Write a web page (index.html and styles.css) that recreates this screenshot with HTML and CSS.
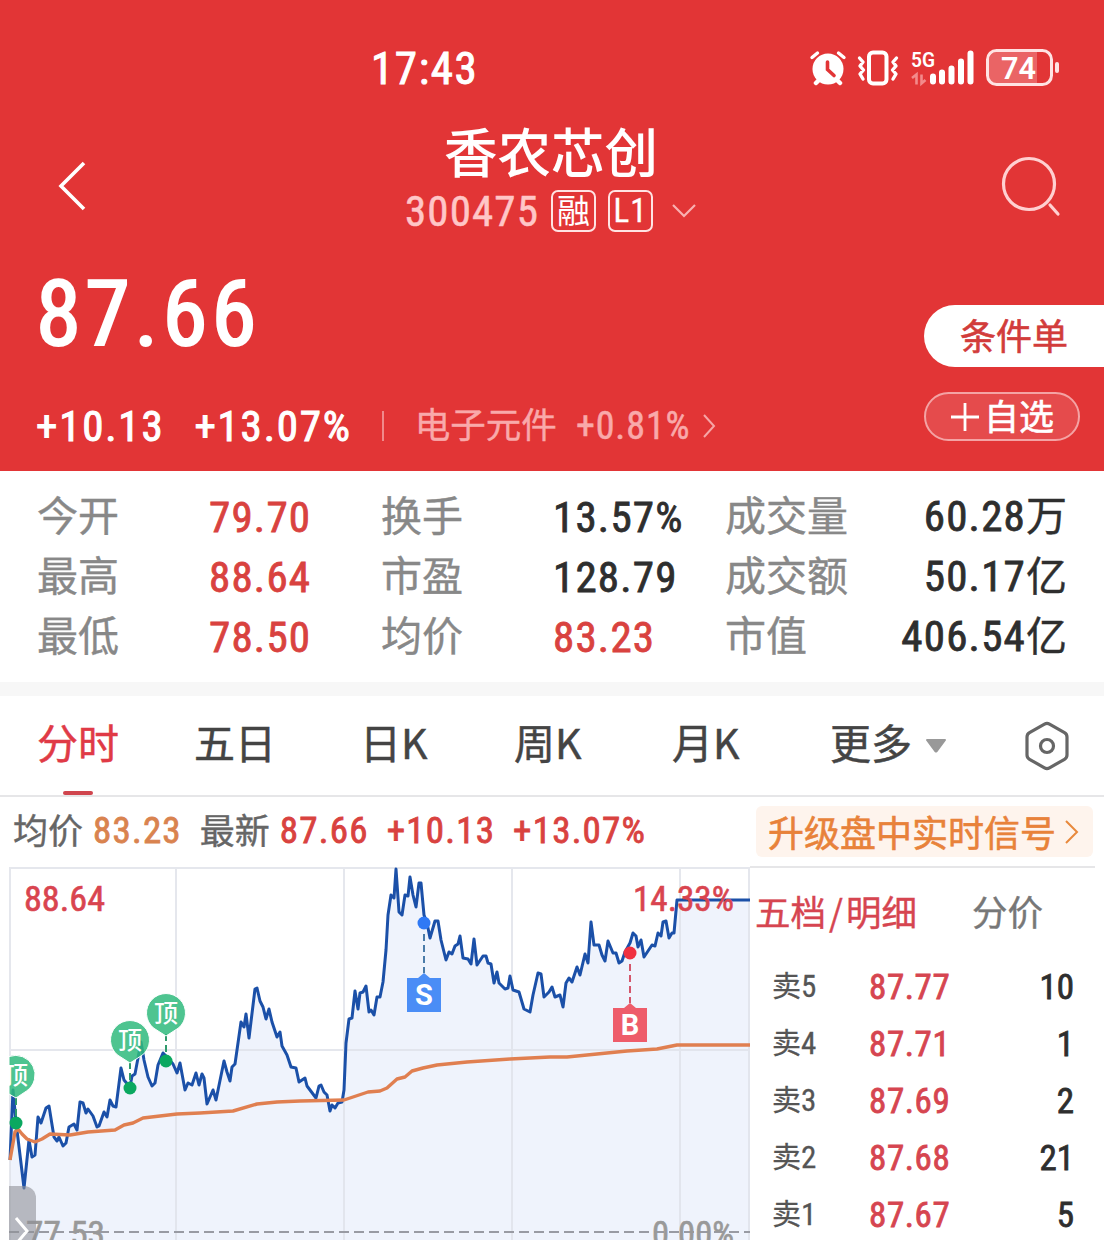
FILE: index.html
```html
<!DOCTYPE html>
<html lang="zh-CN">
<head>
  <meta charset="utf-8">
  <meta name="viewport" content="width=device-width, initial-scale=1">
  <title>香农芯创 300475</title>
  <link rel="stylesheet" href="styles.css">
</head>
<body>
  <header class="header">
    <div class="status-bar">
      <span class="num clock">17:43</span>
      <div class="status-icons">
        <svg class="alarm" width="38" height="36" viewBox="0 0 38 36">
          <g fill="none" stroke="#fff" stroke-linecap="round">
            <path d="M3 7.500 8.500 3M35 7.500 29.500 3" stroke-width="3.400"/>
            <path d="M7 33l4-4M31 33l-4-4" stroke-width="4.500"/>
          </g>
          <circle cx="19" cy="19" r="15.500" fill="#fff"/>
          <path d="M18.500 12v7.500l6.500 6" fill="none" stroke="#e23536" stroke-width="3.600" stroke-linecap="round"/>
        </svg>
        <svg class="vibrate" width="42" height="36" viewBox="0 0 42 36" fill="none" stroke="#fff" stroke-linecap="round" stroke-linejoin="round">
          <rect x="12" y="2.500" width="17.500" height="31" rx="4" stroke-width="4"/>
          <path d="M2.500 8l3.500 4-3 4 3.500 4-3.500 4 3 5M39.500 8l-3.500 4 3 4-3.500 4 3.500 4-3 5" stroke-width="3.400"/>
        </svg>
        <svg class="signal" width="64" height="36" viewBox="0 0 64 36">
          <text x="0" y="17" class="net" textLength="24" lengthAdjust="spacingAndGlyphs">5G</text>
          <g stroke="#fff" stroke-width="6" stroke-linecap="round">
            <path d="M22 31.500v-5M31 31.500v-9M40.500 31.500v-13M50 31.500v-20M59.500 31.500v-28"/>
          </g>
          <path d="M1 28l4.500-3.500v10M10.500 24.500v9l4-3.500" fill="none" stroke="#f38a8b" stroke-width="2.600"/>
        </svg>
        <svg class="battery" width="74" height="38" viewBox="0 0 74 38">
          <path d="M11 3H51V35H11a8 8 0 0 1-8-8V11a8 8 0 0 1 8-8z" fill="#ea6465"/>
          <rect x="1.500" y="1.500" width="64" height="34" rx="9" fill="none" stroke="#ffe3e3" stroke-width="3"/>
          <rect x="69" y="13" width="4" height="11" rx="2" fill="#ffe3e3"/>
          <text x="15" y="30" class="level" textLength="35" lengthAdjust="spacingAndGlyphs">74</text>
        </svg>
      </div>
    </div>

    <nav class="nav">
      <svg class="back" width="30" height="50" viewBox="0 0 30 50"><path d="M27 2 4 25l23 23" fill="none" stroke="#fff" stroke-width="3.600"/></svg>
      <div class="title">
        <h1>香农芯创</h1>
        <div class="code-row">
          <span class="num code">300475</span>
          <span class="tag">融</span>
          <span class="tag num">L1</span>
          <svg width="26" height="16" viewBox="0 0 26 16"><path d="M2 2l11 11L24 2" fill="none" stroke="#f9b0b1" stroke-width="2.200"/></svg>
        </div>
      </div>
      <svg class="search" width="60" height="62" viewBox="0 0 60 62" fill="none" stroke="#ffd0d1" stroke-width="3.200">
        <circle cx="28" cy="29" r="25.500"/>
        <path d="M49 50l8 9" stroke-linecap="round"/>
      </svg>
    </nav>

    <div class="quote">
      <div class="quote-main">
        <div class="num price">87.66</div>
        <div class="change-row">
          <span class="num change">+10.13</span>
          <span class="num change">+13.07%</span>
          <span class="divider"></span>
          <span class="sector">电子元件</span>
          <span class="num sector-change">+0.81%</span>
          <svg width="16" height="26" viewBox="0 0 16 26"><path d="M3 2l10 11L3 24" fill="none" stroke="#f6a5a6" stroke-width="2"/></svg>
        </div>
      </div>
      <div class="quote-actions">
        <button class="btn btn-order">条件单</button>
        <button class="btn btn-add">
          <svg width="30" height="30" viewBox="0 0 30 30"><path d="M15 1v28M1 15h28" stroke="#fff" stroke-width="2.800"/></svg>自选
        </button>
      </div>
    </div>
  </header>

  <section class="stats">
    <span class="label">今开</span><span class="num red">79.70</span>
    <span class="label">换手</span><span class="num">13.57%</span>
    <span class="label">成交量</span><span class="total"><span class="num">60.28</span>万</span>
    <span class="label">最高</span><span class="num red">88.64</span>
    <span class="label">市盈</span><span class="num">128.79</span>
    <span class="label">成交额</span><span class="total"><span class="num">50.17</span>亿</span>
    <span class="label">最低</span><span class="num red">78.50</span>
    <span class="label">均价</span><span class="num red">83.23</span>
    <span class="label">市值</span><span class="total"><span class="num">406.54</span>亿</span>
  </section>

  <div class="tabs">
    <span class="tab active">分时</span>
    <span class="tab">五日</span>
    <span class="tab">日K</span>
    <span class="tab">周K</span>
    <span class="tab">月K</span>
    <span class="tab">更多<svg width="22" height="14" viewBox="0 0 22 14"><path d="M2 1h18L11.500 12.500h-1z" fill="#999" stroke="#999" stroke-width="2" stroke-linejoin="round"/></svg></span>
    <svg width="44" height="50" viewBox="0 0 44 50" fill="none" stroke="#666" stroke-width="3.200" stroke-linejoin="round">
      <path d="M19.500 3.200a5 5 0 0 1 5 0l15 8.500a5 5 0 0 1 2.500 4.300v18a5 5 0 0 1-2.500 4.300l-15 8.500a5 5 0 0 1-5 0l-15-8.500A5 5 0 0 1 2 34V16a5 5 0 0 1 2.500-4.300z"/>
      <circle cx="22" cy="25" r="6.500"/>
    </svg>
  </div>

  <div class="summary">
    <span class="sum-label">均价</span>
    <span class="num sum-avg">83.23</span>
    <span class="sum-label">最新</span>
    <span class="num sum-last">87.66</span>
    <span class="num sum-chg">+10.13</span>
    <span class="num sum-pct">+13.07%</span>
    <a class="upgrade">升级盘中实时信号<svg width="16" height="26" viewBox="0 0 16 26"><path d="M2 2l11 11L2 24" fill="none" stroke="#e8893c" stroke-width="2"/></svg></a>
  </div>

  <main class="market">
    <svg class="chart" width="750" height="374" viewBox="0 866 750 374">
      <path class="area" d=""/>
      <path class="grid" d="M9 868H750M10 867V1240M176 867V1240M344 867V1240M512 867V1240M680 867V1240M749 867V1240M10 1050H750"/>
      <path class="base" d="M9 1232H750"/>
      <polyline class="price-line" points="10,1160 13,1090 16,1122 24,1188 29,1140 32,1157 35,1155 38,1117 41,1123 46,1108 49,1106 54,1137 57,1141 59,1137 63,1146 66,1143 69,1127 74,1124 77,1130 80,1102 83,1103 86,1113 88,1109 93,1116 97,1127 99,1126 104,1112 107,1117 110,1100 113,1106 116,1107 121,1068 124,1080 130,1087 132,1076 135,1074 138,1058 141,1042 144,1060 148,1077 152,1086 155,1083 158,1065 163,1053 167,1057 173,1064 177,1073 180,1063 185,1090 188,1083 192,1085 196,1073 199,1085 202,1074 204,1078 207,1104 213,1090 216,1100 224,1061 227,1072 230,1081 232,1067 235,1064 241,1022 244,1027 246,1014 249,1038 255,989 257,988 260,1001 263,1007 266,1019 269,1009 272,1022 277,1037 280,1032 282,1046 287,1055 291,1067 296,1068 299,1082 305,1078 307,1086 316,1098 319,1086 321,1085 324,1092 327,1095 330,1111 332,1105 335,1108 338,1103 342,1102 344,1090 346,1043 349,1019 352,1018 355,991 358,1009 360,993 363,992 366,986 369,1012 371,1010 374,1015 377,997 380,997 383,982 386,950 388,915 391,895 394,898 396,869 399,912 402,915 405,895 408,896 410,877 413,895 416,907 419,883 421,883 424,915 427,923 430,938 435,921 438,921 441,940 446,960 449,952 452,954 455,946 458,944 460,936 463,958 468,959 471,964 474,939 477,965 483,956 486,956 488,963 491,964 494,983 497,972 499,983 505,989 508,988 510,976 513,990 519,992 524,1009 530,1012 533,995 538,973 541,974 544,997 549,992 552,987 555,997 560,995 563,1007 566,983 569,978 572,982 577,967 580,975 585,954 588,963 591,922 594,945 599,945 602,955 605,961 608,941 613,953 616,953 619,963 622,961 625,952 630,943 633,933 636,936 638,947 641,940 644,957 652,945 655,946 658,933 661,936 663,922 666,921 669,938 672,933 674,933 677,900 750,900"/>
      <polyline class="avg-line" points="10,1160 15,1132 18,1129 22,1134 27,1139 35,1142 42,1139 50,1134 70,1135 88,1132 115,1130 124,1125 133,1123 143,1118 177,1114 200,1113 233,1111 257,1104 277,1102 300,1101 344,1100 368,1092 380,1091 387,1088 397,1079 405,1077 412,1071 423,1068 437,1065 467,1062 510,1059 550,1057 567,1057 627,1051 657,1049 677,1045 750,1045"/>

      <text class="num axis up" x="24" y="911" textLength="81" lengthAdjust="spacingAndGlyphs">88.64</text>
      <text class="num axis up" x="633" y="911" textLength="101" lengthAdjust="spacingAndGlyphs">14.33%</text>
      <text class="num axis flat" x="26" y="1246" textLength="79" lengthAdjust="spacingAndGlyphs">77.53</text>
      <text class="num axis flat" x="652" y="1246" textLength="82" lengthAdjust="spacingAndGlyphs">0.00%</text>

      <!-- top signals -->
      <g class="top-signal">
        <path class="stem" d="M16 1098V1117M130 1062V1082M166 1034V1055"/>
        <path class="pin" d="M9 1056.500A19.500 19.500 0 0 1 26.500 1091L16 1098 9 1094z"/>
        <path class="pin" d="M117.500 1055A19.500 19.500 0 1 1 142.500 1055L130 1063z"/>
        <path class="pin" d="M153.500 1028A19.500 19.500 0 1 1 178.500 1028L166 1036z"/>
        <circle cx="16" cy="1123" r="6.500"/>
        <circle cx="130" cy="1088" r="6.500"/>
        <circle cx="166" cy="1061" r="6.500"/>
        <svg x="9" y="1056" width="40" height="40" viewBox="9 1056 40 40"><text x="16" y="1084">顶</text></svg>
        <text x="130" y="1049">顶</text>
        <text x="166" y="1022">顶</text>
      </g>

      <!-- sell / buy signals -->
      <g class="trade sell">
        <path class="stem" d="M424 934V973"/>
        <circle cx="424" cy="923" r="6.500"/>
        <path class="flag" d="M407 978H418L424 973 430 978H441V1012H407z"/>
        <text x="424" y="1005">S</text>
      </g>
      <g class="trade buy">
        <path class="stem" d="M630 964V1003"/>
        <circle cx="630" cy="953" r="6.500"/>
        <path class="flag" d="M613 1008H624L630 1003 636 1008H647V1042H613z"/>
        <text x="630" y="1035">B</text>
      </g>

      <!-- side drawer handle -->
      <path class="handle" d="M9 1186H24a12 12 0 0 1 12 12V1240H9z"/>
      <path class="handle-arrow" d="M16 1218L27 1231 16 1244"/>
    </svg>

    <aside class="orders">
      <div class="order-tabs">
        <span class="order-tab active">五档<span class="slash">/</span>明细</span>
        <span class="order-tab">分价</span>
      </div>
      <div class="order-row"><span class="level-name">卖<i class="num">5</i></span><span class="num red">87.77</span><span class="num qty">10</span></div>
      <div class="order-row"><span class="level-name">卖<i class="num">4</i></span><span class="num red">87.71</span><span class="num qty">1</span></div>
      <div class="order-row"><span class="level-name">卖<i class="num">3</i></span><span class="num red">87.69</span><span class="num qty">2</span></div>
      <div class="order-row"><span class="level-name">卖<i class="num">2</i></span><span class="num red">87.68</span><span class="num qty">21</span></div>
      <div class="order-row"><span class="level-name">卖<i class="num">1</i></span><span class="num red">87.67</span><span class="num qty">5</span></div>
    </aside>
  </main>

  <script>
    // shade everything below the price line
    const line = document.querySelector('.price-line').getAttribute('points');
    document.querySelector('.area').setAttribute('d', `M10 1240L${line.replaceAll(' ', 'L')}V1240z`);
  </script>
</body>
</html>
```
FILE: styles.css
```css
:root {
  --brand: #e23536;
  --red: #d9423f;
  --text: #2e2e2e;
  --muted: #888;
  --line: #e6e6e8;
  --orange: #e8823a;
}
* { box-sizing: border-box; }
body {
  margin: 0;
  width: 1104px;
  height: 1240px;
  overflow: hidden;
  background: #fff;
  color: var(--text);
  font-family: "Noto Sans CJK SC", sans-serif;
}
svg { display: block; flex: none; }
.num {
  font-family: Roboto, "Noto Sans CJK SC", sans-serif;
  font-stretch: 85%;
  font-weight: 400;
  font-style: normal;
  -webkit-text-stroke: .8px;
}
.red { color: var(--red); }

/* header */
.header {
  height: 471px;
  background: var(--brand);
  color: #fff;
}
.status-bar {
  display: flex;
  align-items: center;
  justify-content: space-between;
  height: 136px;
  padding: 0 44px 0 371px;
}
.clock { font-size: 45px; letter-spacing: 1.6px; -webkit-text-stroke: 1px; }
.status-icons { display: flex; align-items: center; }
.vibrate { margin-left: 10px; }
.signal { margin-left: 12px; overflow: visible; }
.battery { margin-left: 11px; }
.net { font: 600 21px Roboto, sans-serif; fill: #fff; }
.level { font: 600 31px Roboto, sans-serif; fill: #fff; }
.nav {
  display: flex;
  align-items: center;
  justify-content: space-between;
  height: 120px;
  margin-top: -10px;
  padding: 0 43px 0 57px;
}
.title {
  display: flex;
  flex-direction: column;
  align-items: center;
  margin: -3px 0 0 14px;
}
h1 {
  margin: 0;
  font-size: 53.5px;
  font-weight: 500;
  line-height: 52px;
}
.code-row {
  display: flex;
  align-items: center;
  gap: 12px;
  height: 70px;
}
.code { font-size: 43px; color: #ffc6c7; letter-spacing: 1.1px; -webkit-text-stroke: .5px; }
.tag {
  width: 45px;
  height: 42px;
  border: 2px solid #ffe3e3;
  border-radius: 7px;
  font-size: 33px;
  line-height: 35px;
  text-align: center;
}
.tag.num { line-height: 38px; letter-spacing: 1px; -webkit-text-stroke: .3px; }
.code-row svg { margin-left: 6px; }
.quote { display: flex; justify-content: space-between; }
.quote-main { padding: 15px 0 0 36px; }
.price {
  font-size: 91px;
  line-height: 107px;
  letter-spacing: 4.2px;
  -webkit-text-stroke: 2.2px;
}
.change-row {
  display: flex;
  align-items: center;
  height: 60px;
  margin-top: 28px;
}
.change { margin-right: 30px; font-size: 43px; letter-spacing: 1.8px; -webkit-text-stroke: 1px; }
.divider { width: 2px; height: 30px; background: #f08a8b; }
.sector {
  margin-left: 31px;
  font-size: 35.5px;
  line-height: 56px;
  padding-bottom: 6px;
  color: #f9a9aa;
  -webkit-text-stroke: .4px;
}
.sector-change { margin: 0 10px 0 19px; font-size: 38px; letter-spacing: .9px; color: #f9a9aa; -webkit-text-stroke: .5px; }
.quote-actions {
  display: flex;
  flex-direction: column;
  gap: 25px;
  width: 180px;
  padding-top: 59px;
}
.btn {
  display: flex;
  align-items: center;
  justify-content: center;
  border: 0;
  padding: 0 0 4px;
  font: 400 36px "Noto Sans CJK SC", sans-serif;
  -webkit-text-stroke: .6px;
}
.btn-order {
  height: 62px;
  border-radius: 31px 0 0 31px;
  background: #fff;
  color: #d23c3b;
}
.btn-add {
  width: 156px;
  height: 49px;
  border: 2px solid #f4a3a4;
  border-radius: 25px;
  background: #e54b4c;
  color: #fff;
  font-size: 35px;
  line-height: 45px;
}
.btn-add svg { margin: 4px 4px 0 0; }

/* stats */
.stats {
  display: grid;
  grid-template-columns: 172px 172px 172px 172px auto 1fr;
  grid-auto-rows: 60px;
  align-items: center;
  height: 211px;
  padding: 16px 37px 0;
  font-size: 41px;
}
.stats .num { font-size: 43px; letter-spacing: 1.2px; }
.label {
  padding-bottom: 7px;
  line-height: 53px;
  color: var(--muted);
  -webkit-text-stroke: .4px;
}
.total { text-align: right; line-height: 56px; padding-bottom: 5px; -webkit-text-stroke: .4px; }

/* chart tabs */
.tabs {
  display: grid;
  grid-template-columns: 157px 166px 154px 158px 158px 195px auto;
  align-items: center;
  height: 115px;
  border-top: 14px solid #f7f7f7;
  border-bottom: 2px solid var(--line);
  padding-left: 37px;
  font-size: 41px;
  color: #444;
}
.tab {
  display: flex;
  align-items: center;
  height: 99px;
  padding-bottom: 9px;
  line-height: 90px;
  -webkit-text-stroke: .5px;
}
.tab svg { margin: 9px 0 0 13px; }
.tab.active { position: relative; color: #e03a46; }
.tab.active::after {
  content: "";
  position: absolute;
  left: 26px;
  bottom: 0;
  width: 30px;
  height: 4px;
  border-radius: 2px;
  background: #d0454e;
}

.summary {
  display: flex;
  align-items: center;
  height: 69px;
  padding-left: 13px;
  font-size: 35px;
  color: #666;
}
.summary .num { font-size: 37px; letter-spacing: 1.2px; margin-top: -2px; }
.sum-label { line-height: 60px; padding-bottom: 6px; -webkit-text-stroke: .4px; }
.summary .sum-avg { margin: -2px 18px 0 10px; color: #d9834f; }
.sum-last { margin-left: 10px; }
.sum-chg, .sum-pct { margin-left: 18px; }
.sum-last, .sum-chg, .sum-pct { color: var(--red); }
.upgrade {
  display: flex;
  align-items: center;
  gap: 8px;
  width: 337px;
  height: 51px;
  margin: 0 11px 0 auto;
  padding-left: 12px;
  border-radius: 6px;
  background: #fef4ed;
  color: var(--orange);
  font-size: 36px;
  line-height: 49px;
  -webkit-text-stroke: .6px;
}

/* chart */
.market { display: flex; }
.area { fill: #eff3fc; }
.grid { fill: none; stroke: #dfe1e8; stroke-opacity: .8; stroke-width: 2; }
.base { stroke: #999ba3; stroke-width: 2; stroke-dasharray: 10 5; }
.price-line { fill: none; stroke: #1b50a8; stroke-width: 3; stroke-linejoin: round; }
.avg-line { fill: none; stroke: #e07f50; stroke-width: 3.4; stroke-linejoin: round; }
.axis { font-size: 35px; stroke-width: .6px; -webkit-text-stroke: 0; }
.up { fill: #d9444f; stroke: #d9444f; }
.flat { fill: #999; stroke: #999; }
.stem { fill: none; stroke-width: 2; stroke-dasharray: 7 4; }
.top-signal .stem { stroke: #2f9a6c; }
.top-signal circle { fill: #0aa860; }
.top-signal text { font-size: 24px; font-weight: 500; fill: #fff; text-anchor: middle; }
.pin { fill: #2fba7c; fill-opacity: .85; stroke: #fff; stroke-width: 1; }
.trade text { font: 700 29px Roboto, sans-serif; fill: #fff; text-anchor: middle; }
.sell .stem { stroke: #4a7ba8; }
.sell circle { fill: #2f79f5; }
.sell .flag { fill: #4a8df6; }
.buy .stem { stroke: #d4566a; }
.buy circle { fill: #f03040; }
.buy .flag { fill: #ee5c6a; }
.handle { fill: #8f9198; fill-opacity: .6; }
.handle-arrow { fill: none; stroke: #fff; stroke-width: 3; }

/* order book */
.orders {
  width: 345px;
  border-top: 2px solid var(--line);
  padding-left: 5px;
}
.order-tabs {
  display: flex;
  gap: 55px;
  height: 90px;
  font-size: 35.5px;
  line-height: 86px;
  color: #777;
}
.order-tab { -webkit-text-stroke: .4px; }
.order-tab.active { color: #d64550; }
.slash { padding: 0 3px; }
.order-row {
  display: grid;
  grid-template-columns: 97px 100px 1fr;
  align-items: center;
  height: 57px;
  padding: 0 21px 0 17px;
}
.level-name { padding-bottom: 4px; font-size: 29px; color: #555; line-height: 53px; -webkit-text-stroke: .3px; }
.level-name .num { font-size: 31px; -webkit-text-stroke: .3px; }
.order-row > .num { font-size: 35px; letter-spacing: .6px; }
.order-row > .red { color: #d64550; }
.order-row > .qty { text-align: right; letter-spacing: 0; }
```
